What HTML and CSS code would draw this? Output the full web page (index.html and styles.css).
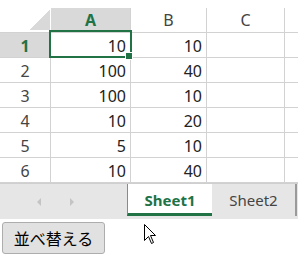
FILE: index.html
```html
<!DOCTYPE html>
<html>
<head>
  <title>並べ替え</title>
  <link rel="stylesheet" href="styles.css">
</head>
<body>
  <div class="book">
    <div class="sheet">
      <div class="cell corner"></div>
      <div class="cell col sel">A</div>
      <div class="cell col">B</div>
      <div class="cell col">C</div>
      <div class="cell col end"></div>

      <div class="cell row sel">1</div>
      <div class="cell num">10</div><div class="cell num">10</div><div class="cell"></div><div class="cell end"></div>
      <div class="cell row">2</div>
      <div class="cell num">100</div><div class="cell num">40</div><div class="cell"></div><div class="cell end"></div>
      <div class="cell row">3</div>
      <div class="cell num">100</div><div class="cell num">10</div><div class="cell"></div><div class="cell end"></div>
      <div class="cell row">4</div>
      <div class="cell num">10</div><div class="cell num">20</div><div class="cell"></div><div class="cell end"></div>
      <div class="cell row">5</div>
      <div class="cell num">5</div><div class="cell num">10</div><div class="cell"></div><div class="cell end"></div>
      <div class="cell row">6</div>
      <div class="cell num">10</div><div class="cell num">40</div><div class="cell"></div><div class="cell end"></div>

      <!-- selection A1 -->
      <div class="select"></div>
      <div class="handle"></div>
    </div>

    <div class="tabs">
      <div class="nav">
        <span class="arrow left"></span>
        <span class="arrow right"></span>
      </div>
      <div class="tab active">Sheet1</div>
      <div class="tab">Sheet2</div>
    </div>
  </div>

  <button class="sort" type="button">並べ替える</button>

  <svg class="cursor" width="13" height="21" viewBox="0 0 13 21">
    <path d="M0.5 0.5 L0.5 16.5 L4.5 12.5 L7.5 19.5 L9.5 18.5 L6.5 11.5 L11.5 11.5 Z" fill="#fff" stroke="#000" stroke-width="1"/>
  </svg>
</body>
</html>
```

FILE: styles.css
```css
body { margin: 0; background: #fff; font-family: "Noto Sans", Arial, sans-serif; position: relative; }

.book { padding-top: 8px; }

.sheet { position: relative; display: grid; grid-template-columns: 51px 80px 76px 78px 13px;
         grid-auto-rows: 25px; font-size: 16px; color: #222; }
.cell { box-sizing: border-box; border-right: 1px solid #d2d2d2; border-bottom: 1px solid #d2d2d2;
        display: flex; align-items: center; padding-top: 2px; }
.cell.end { border-right: none; }

.corner { background: linear-gradient(to bottom right, transparent 50%, #d9d9d9 50%) no-repeat;
          background-size: 20px 20px; background-position: right 1px bottom 2px; border-right: none; }
.col { justify-content: center; color: #444; font-size: 16px; padding-top: 0; }
.row { justify-content: center; color: #444; font-size: 16px; }
.sel { background: #d9d9d9; color: #217346; font-weight: bold; }
.num { justify-content: flex-end; padding-right: 4px; }

.select { position: absolute; left: 49px; top: 22px; width: 83px; height: 28px; box-sizing: border-box;
          border: 2px solid #217346; }
.handle { position: absolute; left: 126px; top: 45px; width: 6px; height: 6px; background: #217346;
          border: 1px solid #fff; margin: -1px 0 0 -1px; }

.tabs { display: flex; height: 36px; background: #e6e6e6; border-top: 1px solid #cfcfcf; box-sizing: border-box; }
.nav { width: 127px; display: flex; align-items: center; justify-content: center; gap: 29px; padding-right: 16px;
       box-sizing: border-box; }
.arrow { width: 0; height: 0; border-top: 4px solid transparent; border-bottom: 4px solid transparent; }
.arrow.left { border-right: 4px solid #c4c4c4; }
.arrow.right { border-left: 4px solid #c4c4c4; }

.tab { width: 85px; height: 32px; box-sizing: border-box; display: flex; align-items: center; justify-content: center;
       font-size: 15px; color: #444; border-right: 1px solid #c6c6c6; }
.tab.active { background: #fff; color: #217346; font-weight: bold; border-left: 1px solid #8a8a8a;
              border-right: none; border-bottom: 3px solid #217346; padding-top: 2px; }
.tab:last-child { border-right: 2px solid #9a9a9a; }

.sort { margin: 3px 0 0 2px; width: 103px; height: 32px; padding: 0; background: #e1e1e1;
        border: 1px solid #adadad; border-radius: 3px; font-family: "Noto Sans CJK JP", sans-serif;
        font-size: 16px; color: #000; }

.cursor { position: absolute; left: 144px; top: 224px; }
```
